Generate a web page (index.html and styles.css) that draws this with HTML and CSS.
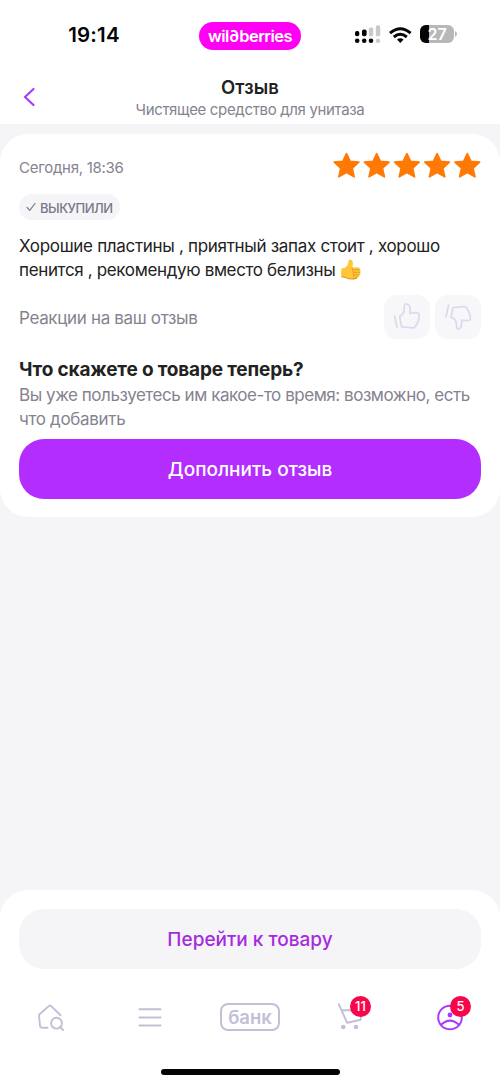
FILE: index.html
```html
<!DOCTYPE html>
<html lang="ru">
<head>
<meta charset="utf-8">
<title>Отзыв</title>
<link rel="stylesheet" href="styles.css">
</head>
<body>
<div class="screen">
  <header class="header">
    <div class="status">
      <span class="time">19:14</span>
      <span class="logo" aria-label="wildberries"><span>wil∂berries</span></span>
      <svg class="signals" viewBox="0 0 104 22" width="104" height="22">
        <g fill="#050505"><rect x="1" y="7" width="4.3" height="5.3" rx="1.8"/><rect x="8" y="5.5" width="4.6" height="6.8" rx="1.8"/><circle cx="3.2" cy="16.8" r="2.3"/><circle cx="10.2" cy="16.8" r="2.3"/><circle cx="17" cy="16.8" r="2.3"/></g>
        <g fill="#c9c9c9"><rect x="14.8" y="3.5" width="4.4" height="8.8" rx="1.6"/><rect x="21.8" y="1.3" width="4.4" height="11" rx="1.6"/><circle cx="24" cy="16.8" r="2.2"/></g>
        <g fill="none" stroke="#050505" stroke-width="3"><path d="M36 9.2Q46.300 .2 56.600 9.200"/><path d="M39.800 13Q46.300 7.500 52.800 13"/></g>
        <path d="M43 15.600Q46.300 12.800 49.600 15.600L46.300 19Z" fill="#050505"/>
        <path d="M72 1h22a6 6 0 0 1 6 6v6a6 6 0 0 1-6 6H72a6 6 0 0 1-6-6V7a6 6 0 0 1 6-6Z" fill="#b8b8b8"/>
        <path d="M75 1h-3a6 6 0 0 0-6 6v6a6 6 0 0 0 6 6h3Z" fill="#050505"/>
        <path d="M101 7q2 1 2 3t-2 3Z" fill="#b8b8b8"/>
        <text x="83.200" y="15.800" text-anchor="middle" class="charge">27</text>
      </svg>
    </div>
    <div class="title-row">
      <svg class="back" viewBox="0 0 14 22" width="14" height="22"><path d="M11.500 3 3 11l8.500 8" fill="none" stroke="#a73afd" stroke-width="2.200" stroke-linecap="round" stroke-linejoin="round"/></svg>
      <div class="titles">
        <h1><span>Отзыв</span></h1>
        <p><span>Чистящее средство для унитаза</span></p>
      </div>
    </div>
  </header>

  <main class="card">
    <div class="meta">
      <span class="date">Сегодня, 18:36</span>
      <svg class="stars" viewBox="0 0 150 30" width="150" height="30">
        <defs><path id="star" d="M0-12 3.600-4.300 12.300-3.400 5.800 2.700 7.700 11.400 0 7.100-7.700 11.400-5.800 2.700-12.300-3.400-3.600-4.300Z"/></defs>
        <g fill="#ff7a05" stroke="#ff7a05" stroke-width="1.600" stroke-linejoin="round"><use href="#star" x="14.500" y="14.500"/><use href="#star" x="44.700" y="14.500"/><use href="#star" x="74.900" y="14.500"/><use href="#star" x="105.100" y="14.500"/><use href="#star" x="135.300" y="14.500"/></g>
      </svg>
    </div>
    <div class="badge">
      <svg viewBox="0 0 10 10" width="10" height="10"><path d="M1 5.300 3.700 8.300 9 1.500" fill="none" stroke="#7a788b" stroke-width="1.200" stroke-linecap="round" stroke-linejoin="round"/></svg>
      <span>ВЫКУПИЛИ</span>
    </div>
    <p class="review"><span class="l1">Хорошие пластины , приятный запах стоит , хорошо</span><br><span class="l2">пенится , рекомендую вместо белизны</span>
      <svg class="emoji" viewBox="0 0 22 22" width="22" height="22">
        <path d="M1.500 9.500Q5 9.600 7.300 6.400Q8.500 4.700 8.500 2Q8.700.3 10.400.5Q12.500.8 12.900 3.600Q13.100 6 12.300 8.500L17.800 8.200Q20 8.400 19.800 10.200Q21 11 20.400 12.700Q21.100 14.200 19.700 15.500Q20 18 17.800 18.300Q16.800 20.500 12.500 20.300Q8.500 20.200 6.500 18.600L1.500 18Q.4 13.700 1.500 9.500Z" fill="#ffc638"/>
        <path d="M1.500 17Q4.500 17 7 18.500Q12 20.300 17.500 18.300Q16.600 20.900 12 20.500Q7.500 20.500 5.500 18.900L1.500 18.200Z" fill="#e79b24"/>
        <path d="M12.300 8.500Q11.500 10 13.300 10.700H19.600M13.300 10.700Q11.800 12 13.500 13.300H20M13.500 13.300Q12.300 15 14 15.700H19.300M14 15.700Q12.700 17.500 14.500 18.200H17.500" fill="none" stroke="#df9320" stroke-width=".8"/>
      </svg>
    </p>
    <div class="reactions">
      <span class="rlabel">Реакции на ваш отзыв</span>
      <span class="rbtn"><svg viewBox="0 0 46 44" width="46" height="44"><g fill="none" stroke="#dbd9ec" stroke-width="1.700" stroke-linecap="round" stroke-linejoin="round"><path d="M10.700 21 13 32.500"/><path d="M15.700 21.500Q19.500 19.500 20.300 15.500L20.300 11Q20.500 8.600 22.500 9Q26 10 26.200 13.500L26 18.500 31.800 17.700Q35.200 17.600 35.200 21Q35.200 24.500 33.300 28L31.400 31.500Q30.700 33 29 32.800L17.500 31.800Z"/></g></svg></span>
      <span class="rbtn"><svg viewBox="0 0 46 44" width="46" height="44"><g fill="none" stroke="#dbd9ec" stroke-width="1.700" stroke-linecap="round" stroke-linejoin="round"><path d="M13.500 10 11 22"/><path d="M18 12.500 29 11.600Q31 11.400 31.800 13L33.800 17Q35.400 20 35.400 23Q35.400 26 32.300 25.600L26.500 25.200 26.600 29Q26.600 32.500 23.800 34Q22 34.300 21.600 32L21.300 28Q20.600 23.500 16 22.400Z"/></g></svg></span>
    </div>
    <h2><span>Что скажете о товаре теперь?</span></h2>
    <p class="hint"><span class="h1l">Вы уже пользуетесь им какое-то время: возможно, есть</span><br><span class="h2l">что добавить</span></p>
    <button class="primary"><span>Дополнить отзыв</span></button>
  </main>

  <footer class="footer">
    <button class="secondary"><span>Перейти к товару</span></button>
    <nav class="tabs">
      <a class="tab"><svg viewBox="0 0 28 28" width="28" height="28"><g fill="none" stroke="#c2bfd6" stroke-width="1.900" stroke-linecap="round" stroke-linejoin="round"><path d="M11.500 24.800H6.500Q4.200 24.800 4 22.500L3 13Q2.900 11.800 3.800 11L12.800 3.100Q14 2 15.200 3.100L24.600 12.200"/><circle cx="20.500" cy="20.200" r="5.400"/><path d="M24.300 24 27 27"/></g></svg></a>
      <a class="tab"><svg viewBox="0 0 28 28" width="28" height="28"><path d="M3.500 6.300H24.500M3.500 14.400H24.500M3.500 22.500H24.500" stroke="#c2bfd6" stroke-width="2" stroke-linecap="round"/></svg></a>
      <a class="tab"><span class="bank"><span>банк</span></span></a>
      <a class="tab"><svg viewBox="0 0 28 28" width="28" height="28"><g fill="none" stroke="#c2bfd6" stroke-width="1.900" stroke-linecap="round" stroke-linejoin="round"><path d="M2.700 1.200 11.200 19.800 24.500 16.800 27 7.300H5.600"/></g><circle cx="7.300" cy="24" r="2.300" fill="#c2bfd6"/><circle cx="20" cy="24" r="2.300" fill="#c2bfd6"/></svg><b class="count">11</b></a>
      <a class="tab"><svg viewBox="0 0 28 28" width="28" height="28"><g fill="none" stroke="#a73afd" stroke-width="2"><circle cx="14" cy="14.500" r="11.800"/><path d="M4.800 22Q14 13.200 23.200 22"/></g><circle cx="14" cy="12" r="2.400" fill="#a73afd"/></svg><b class="count">5</b></a>
    </nav>
    <div class="home"></div>
  </footer>
</div>
</body>
</html>
```
FILE: styles.css
```css
* { box-sizing: border-box; margin: 0; }
body { font-family: Inter, "Noto Sans", sans-serif; color: #222; }
button { font: inherit; border: 0; padding: 0; }
svg { display: block; }
.screen { width: 500px; height: 1085px; display: flex; flex-direction: column; background: #f5f5f8; overflow: hidden; }
.header { height: 124px; background: #fff; flex: none; }
.status { height: 72px; display: grid; grid-template-columns: 188px 124px 188px; align-items: center; }
.time { font-size: 20.5px; font-weight: 600; color: #050505; justify-self: center; line-height: 24px; margin-top: -3px; letter-spacing: .2px; }
.logo { justify-self: center; width: 102px; height: 28px; border-radius: 14px; background: #ff00f5; color: #fff; font: 600 16.500px/28px Inter, sans-serif; text-align: center; letter-spacing: -.53px; }
.signals { margin: -3px 0 0 42px; }
.charge { font-size: 16px; font-weight: 600; fill: #fff; }
.title-row { position: relative; height: 52px; display: flex; align-items: center; padding-left: 22px; }
.back { flex: none; margin-top: -3px; }
.titles { flex: 1; text-align: center; margin-right: 36px; margin-top: -1px; }
h1 { font-size: 18.5px; font-weight: 600; line-height: 24px; color: #222; letter-spacing: .1px; }
.titles p { font-size: 15px; line-height: 21px; color: #85838f; letter-spacing: -.34px; }
.card { flex: none; height: 383px; margin-top: 10px; padding: 16px 19px 18px; border-radius: 28px; background: #fff; }
.meta { height: 32px; display: flex; justify-content: space-between; align-items: center; color: #85838f; font-size: 15px; }
.date { padding-top: 2px; letter-spacing: -.27px; }
.stars { margin-right: -1px; }
.badge { width: 101px; height: 26px; margin-top: 12px; border-radius: 13px; padding-left: 7px; display: flex; align-items: center; gap: 4px; background: #f5f5f8; color: #7a788b; font-size: 13px; font-weight: 500; letter-spacing: -.5px; }
.badge span { padding-top: 1px; }
.review { margin-top: 15px; font-size: 17px; line-height: 23.500px; height: 48px; white-space: nowrap; letter-spacing: -.31px; }
.l2 { letter-spacing: -.35px; }
.emoji { display: inline-block; vertical-align: -5px; }
.reactions { display: flex; height: 44px; align-items: center; gap: 5px; margin-top: 12px; }
.rlabel { flex: 1; color: #85838f; font-size: 17px; letter-spacing: -.34px; padding-top: 2px; }
.rbtn { width: 46px; height: 44px; border-radius: 13px; background: #f7f7fa; }
h2 { margin-top: 18px; font-size: 19px; line-height: 26px; font-weight: 700; white-space: nowrap; letter-spacing: -.16px; }
.hint { margin-top: 1px; color: #85838f; font-size: 17px; line-height: 23.500px; height: 48px; white-space: nowrap; letter-spacing: -.46px; }
.h2l { letter-spacing: -.33px; }
.primary, .secondary { display: block; width: 462px; height: 60px; border-radius: 25px; font-size: 19px; font-weight: 500; padding-top: 1px; }
.primary { margin-top: 7px; background: #b32dff; color: #fff; }
.footer { margin-top: auto; flex: none; height: 195px; padding: 19px 0 0; background: #fff; border-radius: 28px 28px 0 0; }
.secondary { margin: 0 19px; background: #f5f5f7; color: #a62ae0; }
.tabs { display: grid; grid-template-columns: repeat(5, 1fr); height: 70px; margin-top: 13px; }
.tab { position: relative; display: flex; align-items: center; justify-content: center; }
.bank { width: 60px; height: 28px; border: 2px solid #c2bfd6; border-radius: 8px; color: #c2bfd6; text-align: center; font-size: 18.5px; line-height: 25px; font-weight: 600; }
.count { position: absolute; left: 50px; top: 14px; width: 21px; height: 21px; border-radius: 50%; background: #f8064b; color: #fff; font-size: 13px; font-weight: 500; line-height: 21px; text-align: center; }
.home { width: 179px; height: 6px; border-radius: 3px; background: #050505; margin: 17px auto 0; }
```
